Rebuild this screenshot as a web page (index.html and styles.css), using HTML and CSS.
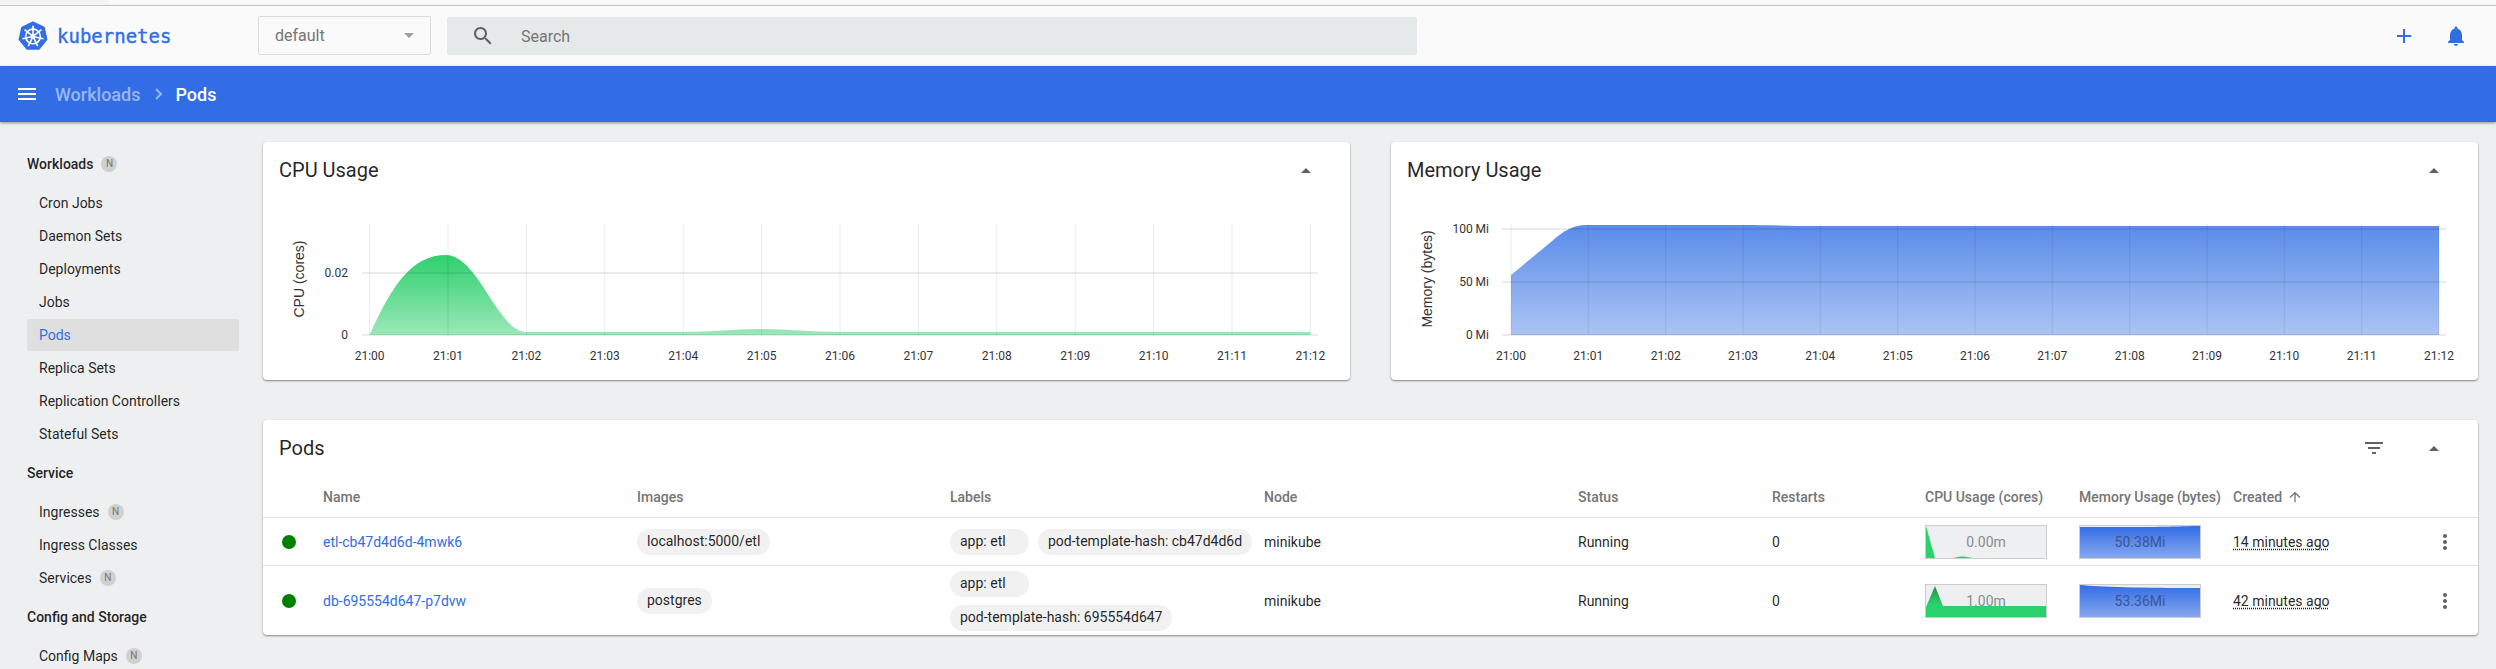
FILE: index.html
```html
<!DOCTYPE html>
<html lang="en">
<head>
  <meta charset="UTF-8"/>
  <meta name="viewport" content="width=device-width, initial-scale=1.0"/>
  <title>Pods - Kubernetes Dashboard</title>
  <link rel="stylesheet" href="styles.css">
</head>
<body>
  <div class="browser-strip"><div class="browser-tab"></div></div>

  <header class="toolbar">
    <div class="brand">
      <svg class="brand-logo" viewBox="0 0 32 32">
        <path class="logo-shape" d="M16 1.5 27.6 7 30.4 19.6 22.4 29.6H9.6L1.6 19.6 4.4 7Z"/>
        <g class="logo-wheel">
          <circle cx="16" cy="16.5" r="7.8"/>
          <path d="M16 16.5V5M16 16.5 25 9.3M16 16.5 27.2 19M16 16.5 21 26.9M16 16.5 11 26.9M16 16.5 4.8 19M16 16.5 7 9.3"/>
        </g>
        <circle class="logo-hub" cx="16" cy="16.5" r="2.4"/>
      </svg>
      <span class="brand-name">kubernetes</span>
    </div>
    <div class="ns-select"><span>default</span><i class="caret-down"></i></div>
    <div class="search">
      <svg class="icon search-icon" viewBox="0 0 24 24"><path d="M15.5 14h-.79l-.28-.27C15.41 12.59 16 11.11 16 9.5 16 5.91 13.09 3 9.5 3S3 5.91 3 9.5 5.91 16 9.5 16c1.61 0 3.09-.59 4.23-1.57l.27.28v.79l5 4.99L20.49 19l-4.99-5zm-6 0C7.01 14 5 11.99 5 9.5S7.01 5 9.5 5 14 7.01 14 9.5 11.99 14 9.5 14z"/></svg>
      <span>Search</span>
    </div>
    <div class="toolbar-actions">
      <svg class="icon" viewBox="0 0 24 24"><path d="M19 13h-6v6h-2v-6H5v-2h6V5h2v6h6v2z"/></svg>
      <svg class="icon" viewBox="0 0 24 24"><path d="M12 22c1.1 0 2-.9 2-2h-4c0 1.1.89 2 2 2zm6-6v-5c0-3.07-1.64-5.64-4.5-6.32V4c0-.83-.67-1.5-1.5-1.5s-1.5.67-1.5 1.5v.68C7.63 5.36 6 7.92 6 11v5l-2 2v1h16v-1l-2-2z"/></svg>
    </div>
  </header>

  <div class="actionbar">
    <svg class="icon" viewBox="0 0 24 24"><path d="M3 18h18v-2H3v2zm0-5h18v-2H3v2zm0-7v2h18V6H3z"/></svg>
    <span class="crumb">Workloads</span>
    <svg class="crumb-sep" viewBox="0 0 8 12"><path d="M1 1l5 5-5 5"/></svg>
    <span class="crumb current">Pods</span>
  </div>

  <div class="layout">
    <nav class="sidebar">
      <div class="nav-title">Workloads<span class="ns-badge">N</span></div>
      <a class="nav-item">Cron Jobs</a>
      <a class="nav-item">Daemon Sets</a>
      <a class="nav-item">Deployments</a>
      <a class="nav-item">Jobs</a>
      <a class="nav-item active">Pods</a>
      <a class="nav-item">Replica Sets</a>
      <a class="nav-item">Replication Controllers</a>
      <a class="nav-item">Stateful Sets</a>
      <div class="nav-title">Service</div>
      <a class="nav-item">Ingresses<span class="ns-badge">N</span></a>
      <a class="nav-item">Ingress Classes</a>
      <a class="nav-item">Services<span class="ns-badge">N</span></a>
      <div class="nav-title">Config and Storage</div>
      <a class="nav-item">Config Maps<span class="ns-badge">N</span></a>
    </nav>

    <main class="content">
      <div class="charts">
        <section class="card">
          <div class="card-head">
            <h2>CPU Usage</h2>
            <i class="caret-up"></i>
          </div>
          <svg class="chart" viewBox="0 0 1087 182">
            <defs>
              <linearGradient id="cpu-fill" x1="0" y1="0" x2="0" y2="1">
                <stop offset="0" stop-color="#2ed06e"/>
                <stop offset="1" stop-color="#9be8b8"/>
              </linearGradient>
              <linearGradient id="mem-fill" x1="0" y1="0" x2="0" y2="1">
                <stop offset="0" stop-color="#5a8cea"/>
                <stop offset="1" stop-color="#abc4f4"/>
              </linearGradient>
            </defs>
            <path d="M106.6 137C130 85 150 57 183 57C215 57 235 134 263 134L420 134C450 134 470 131 498 131C525 131 545 134 577 134L1047.4 134V137Z" fill="url(#cpu-fill)"/>
            <g class="grid-h">
              <path d="M99 75H1055M99 137H1055"/>
            </g>
            <g class="grid-v">
              <path d="M106.6 26V137M185 26V137M263.4 26V137M341.8 26V137M420.2 26V137M498.6 26V137M577 26V137M655.4 26V137M733.8 26V137M812.2 26V137M890.6 26V137M969 26V137M1047.4 26V137"/>
            </g>
            <text class="axis-title" transform="translate(41 81) rotate(-90)">CPU (cores)</text>
            <text class="tick tick-y" x="85" y="79">0.02</text>
            <text class="tick tick-y" x="85" y="141">0</text>
            <g class="ticks-x">
              <text class="tick" x="106.6" y="162">21:00</text>
              <text class="tick" x="185" y="162">21:01</text>
              <text class="tick" x="263.4" y="162">21:02</text>
              <text class="tick" x="341.8" y="162">21:03</text>
              <text class="tick" x="420.2" y="162">21:04</text>
              <text class="tick" x="498.6" y="162">21:05</text>
              <text class="tick" x="577" y="162">21:06</text>
              <text class="tick" x="655.4" y="162">21:07</text>
              <text class="tick" x="733.8" y="162">21:08</text>
              <text class="tick" x="812.2" y="162">21:09</text>
              <text class="tick" x="890.6" y="162">21:10</text>
              <text class="tick" x="969" y="162">21:11</text>
              <text class="tick" x="1047.4" y="162">21:12</text>
            </g>
          </svg>
        </section>

        <section class="card">
          <div class="card-head">
            <h2>Memory Usage</h2>
            <i class="caret-up"></i>
          </div>
          <svg class="chart" viewBox="0 0 1087 182">
            <path d="M120 137V77L160 44C172 33 182 27 196 27L352 27C380 27 400 28 430 28L1048 28V137Z" fill="url(#mem-fill)"/>
            <g class="grid-h">
              <path d="M111 31H1055M111 84H1055M111 137H1055"/>
            </g>
            <g class="grid-v">
              <path d="M120 26V137M197.3 26V137M274.7 26V137M352 26V137M429.3 26V137M506.7 26V137M584 26V137M661.3 26V137M738.7 26V137M816 26V137M893.3 26V137M970.7 26V137M1048 26V137"/>
            </g>
            <text class="axis-title" transform="translate(41 81) rotate(-90)">Memory (bytes)</text>
            <text class="tick tick-y" x="98" y="35">100 Mi</text>
            <text class="tick tick-y" x="98" y="88">50 Mi</text>
            <text class="tick tick-y" x="98" y="141">0 Mi</text>
            <g class="ticks-x">
              <text class="tick" x="120" y="162">21:00</text>
              <text class="tick" x="197.3" y="162">21:01</text>
              <text class="tick" x="274.7" y="162">21:02</text>
              <text class="tick" x="352" y="162">21:03</text>
              <text class="tick" x="429.3" y="162">21:04</text>
              <text class="tick" x="506.7" y="162">21:05</text>
              <text class="tick" x="584" y="162">21:06</text>
              <text class="tick" x="661.3" y="162">21:07</text>
              <text class="tick" x="738.7" y="162">21:08</text>
              <text class="tick" x="816" y="162">21:09</text>
              <text class="tick" x="893.3" y="162">21:10</text>
              <text class="tick" x="970.7" y="162">21:11</text>
              <text class="tick" x="1048" y="162">21:12</text>
            </g>
          </svg>
        </section>
      </div>

      <section class="card pods">
        <div class="card-head">
          <h2>Pods</h2>
          <svg class="icon filter-icon" viewBox="0 0 24 24"><path d="M10 18h4v-2h-4v2zM3 6v2h18V6H3zm3 7h12v-2H6v2z"/></svg>
          <i class="caret-up"></i>
        </div>
        <table class="pod-table">
          <colgroup>
            <col class="col-dot"><col class="col-name"><col class="col-images"><col class="col-labels"><col class="col-node">
            <col class="col-status"><col class="col-restarts"><col class="col-spark"><col class="col-spark"><col class="col-created"><col>
          </colgroup>
          <thead>
            <tr>
              <th></th><th>Name</th><th>Images</th><th>Labels</th><th>Node</th><th>Status</th><th>Restarts</th>
              <th>CPU Usage (cores)</th><th>Memory Usage (bytes)</th>
              <th>Created<svg class="icon sort-icon" viewBox="0 0 24 24"><path d="M4 12l1.41 1.41L11 7.83V20h2V7.83l5.58 5.59L20 12l-8-8-8 8z"/></svg></th>
              <th></th>
            </tr>
          </thead>
          <tbody>
            <tr>
              <td><span class="status-dot"></span></td>
              <td><a class="pod-link">etl-cb47d4d6d-4mwk6</a></td>
              <td><div class="chips"><span class="chip">localhost:5000/etl</span></div></td>
              <td><div class="chips"><span class="chip chip-short">app: etl</span><span class="chip">pod-template-hash: cb47d4d6d</span></div></td>
              <td>minikube</td>
              <td>Running</td>
              <td>0</td>
              <td>
                <div class="spark">
                  <span>0.00m</span>
                  <svg viewBox="0 0 120 32" preserveAspectRatio="none"><path class="spark-cpu" d="M0 0L9 32H0ZM28 32C34 30 38 30 46 32Z"/></svg>
                </div>
              </td>
              <td>
                <div class="spark spark-mem">
                  <svg viewBox="0 0 120 32" preserveAspectRatio="none"><path fill="url(#spark-blue)" d="M0 1L60 1C90 1 105 0 120 0V32H0Z"/></svg>
                  <span>50.38Mi</span>
                </div>
              </td>
              <td><span class="age">14 minutes ago</span></td>
              <td><svg class="icon more-icon" viewBox="0 0 24 24"><path d="M12 8c1.1 0 2-.9 2-2s-.9-2-2-2-2 .9-2 2 .9 2 2 2zm0 2c-1.1 0-2 .9-2 2s.9 2 2 2 2-.9 2-2-.9-2-2-2zm0 6c-1.1 0-2 .9-2 2s.9 2 2 2 2-.9 2-2-.9-2-2-2z"/></svg></td>
            </tr>
            <tr>
              <td><span class="status-dot"></span></td>
              <td><a class="pod-link">db-695554d647-p7dvw</a></td>
              <td><div class="chips"><span class="chip">postgres</span></div></td>
              <td><div class="chips"><span class="chip chip-short">app: etl</span><span class="chip">pod-template-hash: 695554d647</span></div></td>
              <td>minikube</td>
              <td>Running</td>
              <td>0</td>
              <td>
                <div class="spark">
                  <span>1.00m</span>
                  <svg viewBox="0 0 120 32" preserveAspectRatio="none">
                    <defs>
                      <linearGradient id="spark-green" gradientUnits="userSpaceOnUse" x1="0" y1="0" x2="0" y2="32">
                        <stop offset="0" stop-color="#28894d"/>
                        <stop offset=".6" stop-color="#2bd26b"/>
                      </linearGradient>
                      <linearGradient id="spark-blue" x1="0" y1="0" x2="0" y2="1">
                        <stop offset="0" stop-color="#326de6"/>
                        <stop offset="1" stop-color="#86a8ee"/>
                      </linearGradient>
                    </defs>
                    <path fill="url(#spark-green)" d="M0 22L9 1L17 21H120V32H0Z"/>
                  </svg>
                </div>
              </td>
              <td>
                <div class="spark spark-mem">
                  <svg viewBox="0 0 120 32" preserveAspectRatio="none"><path fill="url(#spark-blue)" d="M0 0C20 2 60 3 120 3V32H0Z"/></svg>
                  <span>53.36Mi</span>
                </div>
              </td>
              <td><span class="age">42 minutes ago</span></td>
              <td><svg class="icon more-icon" viewBox="0 0 24 24"><path d="M12 8c1.1 0 2-.9 2-2s-.9-2-2-2-2 .9-2 2 .9 2 2 2zm0 2c-1.1 0-2 .9-2 2s.9 2 2 2 2-.9 2-2-.9-2-2-2zm0 6c-1.1 0-2 .9-2 2s.9 2 2 2 2-.9 2-2-.9-2-2-2z"/></svg></td>
            </tr>
          </tbody>
        </table>
      </section>
    </main>
  </div>
</body>
</html>
```

FILE: styles.css
```css
html, body { height:100%; overflow:hidden; }
body { margin:0; background:#edeff1; font-family:Roboto, sans-serif; font-size:14px; color:rgba(0,0,0,0.87); }
.icon { width:24px; height:24px; flex:none; display:block; fill:currentColor; }

.browser-strip { height:5px; background:#f3f3f3; border-bottom:1px solid #c4c4c4; position:relative; overflow:hidden; }
.browser-tab { height:4px; margin-left:108px; background:#fbfbfb; border-radius:0 0 0 6px; }

.toolbar { height:60px; box-sizing:border-box; padding:0 28px 0 18px; display:flex; align-items:center; background:#fafafa; }
.brand { width:240px; display:flex; align-items:center; gap:9px; color:#326de6; }
.brand-logo { width:30px; height:30px; }
.logo-shape { fill:#326de6; stroke:#326de6; stroke-width:2; stroke-linejoin:round; }
.logo-wheel { fill:none; stroke:#fff; stroke-width:1.7; }
.logo-hub { fill:#fff; }
.brand-name { font-family:"DejaVu Sans Mono", monospace; font-size:19px; line-height:30px; -webkit-text-stroke:0.4px #326de6; }
.ns-select { width:173px; height:39px; box-sizing:border-box; margin:-1px 16px 0 0; padding:0 16px; display:flex; align-items:center; justify-content:space-between; background:#fafafa; border:1px solid #dcdcdc; border-radius:2px; font-size:16px; color:#757575; }
.caret-down { width:0; height:0; border:5px solid transparent; border-top-color:#9e9e9e; border-bottom:0; margin-right:0; }
.search { width:970px; height:38px; display:flex; align-items:center; background:#e6e9ea; border-radius:2px; font-size:16px; color:#757575; }
.search-icon { margin:0 26px 0 24px; color:#616161; }
.toolbar-actions { margin-left:auto; display:flex; gap:28px; color:#326de6; }

.actionbar { height:56px; box-sizing:border-box; padding:0 0 0 15px; display:flex; align-items:center; background:#326de6; color:#fff; box-shadow:0 1px 3px rgba(0,0,0,0.4); position:relative; }
.crumb { font-size:18px; font-weight:500; color:rgba(255,255,255,0.5); margin-left:16px; }
.crumb.current { color:#fff; margin-left:12px; }
.crumb-sep { width:8px; height:12px; margin-left:15px; fill:none; stroke:rgba(255,255,255,0.5); stroke-width:2; }

.layout { display:flex; }

.sidebar { width:263px; flex:none; box-sizing:border-box; padding:26px 24px 0 27px; }
.nav-title { height:32px; margin:7px 0 7px; display:flex; align-items:center; font-weight:500; }
.nav-title:first-child { margin-top:0; }
.nav-item { height:32px; margin-bottom:1px; padding-left:12px; display:flex; align-items:center; border-radius:2px; }
.nav-item.active { background:#dfdfdf; color:#326de6; }
.ns-badge { width:16px; height:16px; margin-left:8px; border-radius:50%; background:#d0d0d0; color:#757575; font-size:10px; font-weight:400; line-height:16px; text-align:center; }

.content { flex:1; min-width:0; padding:20px 18px 0 0; }
.charts { display:grid; grid-template-columns:1087px 1087px; column-gap:41px; margin-bottom:40px; }
.card { background:#fff; border-radius:4px; box-shadow:0 1px 2px rgba(0,0,0,0.45); }
.card-head { height:56px; box-sizing:border-box; padding:0 39px 0 16px; display:flex; align-items:center; }
.card-head h2 { flex:1; margin:0; font-size:20px; font-weight:400; }
.caret-up { width:0; height:0; border:5px solid transparent; border-bottom-color:#616161; border-top:0; }
.filter-icon { margin-right:43px; color:#616161; }

.chart { display:block; width:1087px; height:182px; }
.grid-h path { fill:none; stroke:rgba(0,0,0,0.08); stroke-width:2; }
.grid-v path { fill:none; stroke:rgba(0,0,0,0.08); stroke-width:1; }
.axis-title { font-family:"Liberation Sans", sans-serif; font-size:14px; text-anchor:middle; fill:#333; }
.tick { font-size:12px; text-anchor:middle; fill:#333; }
.tick-y { text-anchor:end; }

.pod-table { width:100%; border-collapse:collapse; table-layout:fixed; }
.col-dot { width:60px; }
.col-name { width:314px; }
.col-images { width:313px; }
.col-labels { width:314px; }
.col-node { width:314px; }
.col-status { width:194px; }
.col-restarts { width:153px; }
.col-spark { width:154px; }
.col-created { width:200px; }
.pod-table th { height:41px; padding:0; border-bottom:1px solid #e0e0e0; font-weight:500; color:#757575; text-align:left; }
.pod-table td { height:47px; padding:0; border-bottom:1px solid #e0e0e0; }
.pod-table tbody tr:last-child td { height:69px; border-bottom:0; }
.sort-icon { display:inline-block; width:16px; height:16px; margin-left:5px; vertical-align:-3px; }
.more-icon { color:#616161; }
.status-dot { display:block; width:14px; height:14px; margin-left:19px; border-radius:50%; background:#008000; }
.pod-link { color:#326de6; }
.chips { display:flex; flex-wrap:wrap; gap:8px 9px; padding-right:10px; }
.chip { height:26px; padding:0 10px; border-radius:13px; background:#f1f1f1; line-height:25px; white-space:nowrap; }
.chip-short { width:59px; }
.spark { width:120px; height:32px; position:relative; border:1px solid #ccc; background:#edeff1; color:#8c8c8c; line-height:32px; text-align:center; }
.spark span { position:relative; }
.spark svg { position:absolute; left:0; top:0; width:100%; height:100%; }
.spark-mem { color:#3a5596; }
.spark-cpu { fill:#2bd26b; }
.age { text-decoration:underline dotted; text-underline-offset:2px; }
```
